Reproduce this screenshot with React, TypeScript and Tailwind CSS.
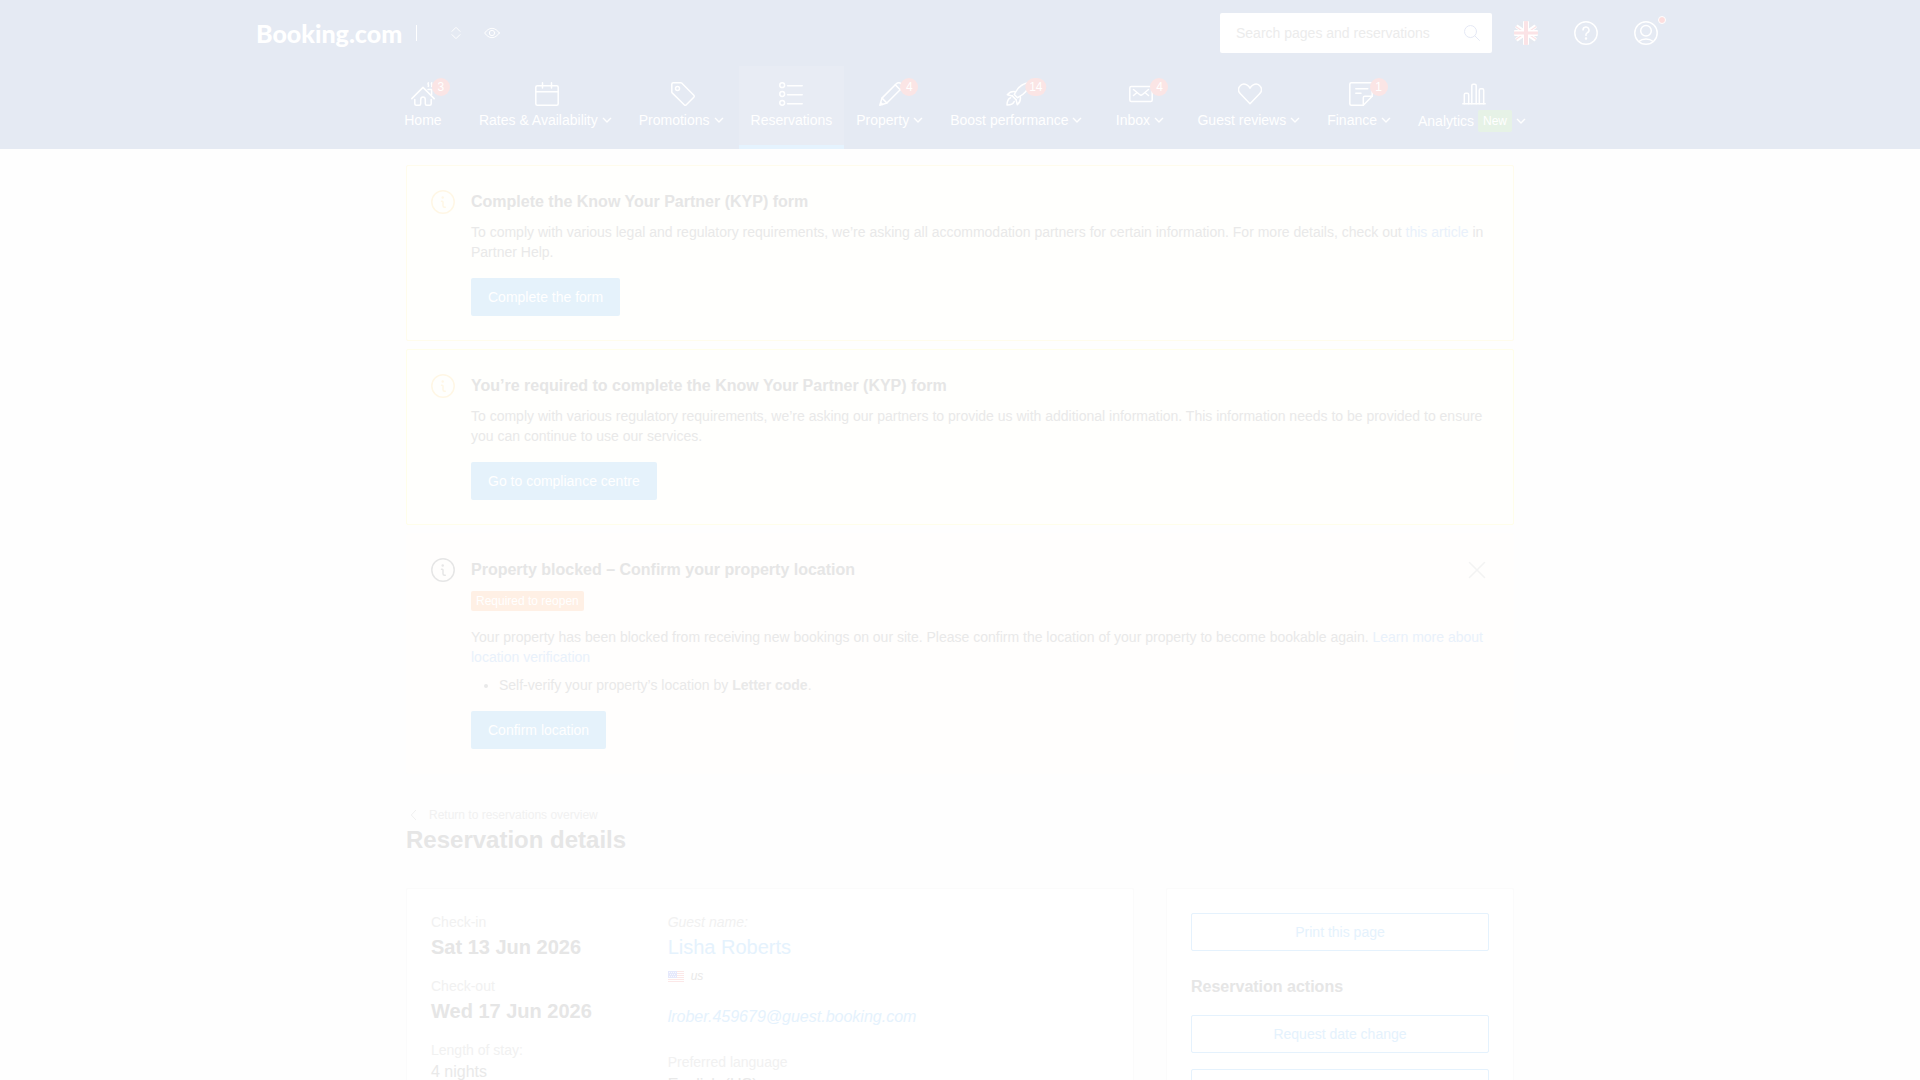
import React from "react";

type IconProps = { children: React.ReactNode; className?: string };

function Icon({ children, className = "size-6" }: IconProps) {
  return (
    <svg
      viewBox="0 0 24 24"
      fill="none"
      stroke="currentColor"
      strokeWidth="1.5"
      strokeLinecap="round"
      strokeLinejoin="round"
      aria-hidden="true"
      className={className}
    >
      {children}
    </svg>
  );
}

const icons = {
  home: (
    <>
      <path d="M.8 16.6 12 5.4l11.2 11.2" />
      <path d="M3.8 17.5v4.2c0 .9.6 1.5 1.5 1.5h2.9c.9 0 1.5-.6 1.5-1.5v-4c0-1.700 1-2.700 2.300-2.700s2.300 1 2.300 2.700v4c0 .9.6 1.500 1.500 1.500h2.900c.9 0 1.500-.6 1.500-1.500v-4.200" />
      <path d="M17 7.500h3.600v5.200M17.300.9c-.9 1.300.9 1.900 0 3.600M20.700.9c-.9 1.300.9 1.900 0 3.600" />
    </>
  ),
  calendar: (
    <>
      <rect x=".8" y="3.700" width="22.400" height="19.500" rx="1.500" />
      <path d="M.8 9.700h22.400M7.500.8v5.200M16.500.8v5.200" />
    </>
  ),
  tag: (
    <>
      <path d="M2.300.8h7.500c.4 0 .8.200 1.100.4l11.900 12c.6.600.6 1.500 0 2.100l-7.500 7.500c-.6.600-1.500.6-2.100 0L1.200 10.900a1.500 1.500 0 0 1-.4-1.100V2.300C.8 1.500 1.500.8 2.300.8Z" />
      <circle cx="6.500" cy="6.500" r="2" />
    </>
  ),
  list: (
    <>
      <circle cx="3.200" cy="3.200" r="2.400" />
      <circle cx="3.200" cy="12" r="2.400" />
      <circle cx="3.200" cy="20.800" r="2.400" />
      <path d="M8.500 3.800h14.700M8.500 12.800h14.700M8.500 21.700h14.700" />
    </>
  ),
  pencil: (
    <>
      <path d="M22.200 1.800c-1.400-1.400-3.500-1.400-4.900 0L3 16.100.8 23.200l7.100-2.200L22.200 6.700c1.400-1.400 1.400-3.500 0-4.900Z" />
      <path d="m3 16.100 4.900 4.900M16.300 2.900l4.900 4.900M1.600 20.500l1.900 1.900" />
    </>
  ),
  rocket: (
    <>
      <path d="M8.300 12.500C11.500 5.500 16.500 1.300 23.200.8c-.5 6.700-4.700 11.700-11.700 14.900l-3.200-3.200Z" />
      <path d="M9.600 9.800c-3.500-.8-6 .3-8.300 2.900l5 1.200M14.200 14.400c.8 3.500-.3 6-2.900 8.300l-1.200-5" />
      <path d="M4.600 15.800c-2.300.8-3.500 3.500-3.600 7.200 3.700-.1 6.400-1.300 7.200-3.600M6.300 13.900l3.800 3.800" />
    </>
  ),
  mail: (
    <>
      <rect x=".8" y="4.500" width="22.400" height="15" rx="1.500" />
      <path d="m4.500 7.500 6 5a2.300 2.300 0 0 0 3 0l6-5M4.500 13.500l3-2.500M19.500 13.500l-3-2.500" />
    </>
  ),
  heart: (
    <path d="m12 21.800-9.600-10c-4.700-4.900.6-12 6.400-9 1.300.7 2.500 1.900 3.200 3.300.7-1.400 1.900-2.600 3.200-3.300 5.800-3 11.100 4.100 6.400 9L12 21.800Z" />
  ),
  note: (
    <>
      <path d="M14.300 23.200h-12c-.8 0-1.500-.7-1.500-1.500V2.300C.8 1.500 1.500.8 2.300.8h19.400c.8 0 1.500.7 1.500 1.500v12l-8.900 8.900Z" />
      <path d="M14.300 23.200v-7.500c0-.8.600-1.400 1.400-1.400h7.500M6.800 6.800h12M6.800 11.300h5.200" />
    </>
  ),
  chart: (
    <>
      <path d="M.8 21.700h22.400" />
      <path d="M2.300 21.700v-9c0-.8.600-1.400 1.400-1.400h1.600c.8 0 1.400.6 1.400 1.400v9M9.800 21.700V3.700c0-.8.600-1.400 1.400-1.400h1.600c.8 0 1.400.6 1.400 1.400v18M17.300 21.700V8.200c0-.8.600-1.400 1.400-1.400h1.600c.8 0 1.400.6 1.400 1.400v13.500" />
    </>
  ),
};

type NavItem = {
  label: string;
  icon: React.ReactNode;
  badge?: string;
  menu?: boolean;
  active?: boolean;
  isNew?: boolean;
};

const navItems: NavItem[] = [
  { label: "Home", icon: icons.home, badge: "3" },
  { label: "Rates & Availability", icon: icons.calendar, menu: true },
  { label: "Promotions", icon: icons.tag, menu: true },
  { label: "Reservations", icon: icons.list, active: true },
  { label: "Property", icon: icons.pencil, badge: "4", menu: true },
  { label: "Boost performance", icon: icons.rocket, badge: "14", menu: true },
  { label: "Inbox", icon: icons.mail, badge: "4", menu: true },
  { label: "Guest reviews", icon: icons.heart, menu: true },
  { label: "Finance", icon: icons.note, badge: "1", menu: true },
  { label: "Analytics", icon: icons.chart, menu: true, isNew: true },
];

function NavLink({ item }: { item: NavItem }) {
  return (
    <a
      href="#"
      aria-current={item.active ? "page" : undefined}
      className={
        item.active
          ? "flex min-w-[88px] flex-col items-center border-b-4 border-[#e5f3fe] bg-[#e8ecf4] px-3 pt-4"
          : "flex min-w-[88px] flex-col items-center border-b-4 border-transparent px-3 pt-4"
      }
    >
      <span className="relative">
        <Icon>{item.icon}</Icon>
        {item.badge && (
          <span className="absolute -top-1 left-[30px] h-[18px] min-w-[18px] -translate-x-1/2 rounded-full bg-[#fbe5e5] px-1 text-center text-[12px] leading-[18px]">
            {item.badge}
          </span>
        )}
      </span>
      <span className="mt-1 flex items-center whitespace-nowrap leading-5">
        {item.label}
        {item.isNew && (
          <span className="ml-1 rounded-xs bg-[#e6f2e6] px-[5px] py-px text-[12px] leading-5">New</span>
        )}
        {item.menu && (
          <Icon className="ml-px size-4">
            <path strokeWidth="2" d="m6.500 9.500 5.500 5.500 5.500-5.500" />
          </Icon>
        )}
      </span>
    </a>
  );
}

function UkFlag() {
  return (
    <svg viewBox="0 0 24 24" className="size-6" aria-hidden="true">
      <clipPath id="uk">
        <circle cx="12" cy="12" r="12" />
      </clipPath>
      <g clipPath="url(#uk)">
        <path fill="#e5e9f0" d="M0 0h24v24H0z" />
        <path stroke="#fff" strokeWidth="4" d="m-2 2 28 20M-2 22 26 2" />
        <path stroke="#fbe3e6" strokeWidth="1.300" d="m-1 3.500 12 8.500M25 20.500 13 12M-1 20.500 11 12M25 3.500 13 12" />
        <path stroke="#fff" strokeWidth="6" d="M12 0v24M0 12h24" />
        <path stroke="#fbe3e6" strokeWidth="4" d="M12 0v24" />
        <path stroke="#fbe3e6" strokeWidth="3" d="M0 12h24" />
      </g>
    </svg>
  );
}

function UsFlag() {
  return (
    <svg viewBox="0 0 16 11" className="h-[11px] w-4" aria-hidden="true">
      <path fill="#fff" d="M0 0h16v11H0z" />
      <path stroke="#fce8e8" d="M0 .5h16M0 2.500h16M0 4.500h16M0 6.500h16M0 8.500h16M0 10.500h16" />
      <path fill="#e6e9fc" d="M0 0h9v7H0z" />
      <path stroke="#f8f9ff" strokeDasharray="1 1" d="M1 1.500h7M2 3.500h6M1 5.500h7" />
    </svg>
  );
}

function Header() {
  return (
    <header className="bg-[#e5eaf3] text-white">
      <div className="mx-auto flex h-[66px] max-w-[1440px] items-center px-4">
        <a href="#" className="w-36 font-['Lato',sans-serif] text-[25px] leading-8 font-black">
          Booking.com
        </a>
        <span className="ml-4 h-4 w-px bg-white" />
        <button type="button" aria-label="Switch property" className="ml-[31px]">
          <Icon className="size-4">
            <path d="m6 9.500 6-6 6 6M6 14.500l6 6 6-6" />
          </Icon>
        </button>
        <button type="button" aria-label="View page" className="ml-5">
          <Icon className="size-4">
            <path d="M23 12c-3 4.300-6.800 7-11 7S4 16.300 1 12c3-4.300 6.800-7 11-7s8 2.700 11 7Z" />
            <circle cx="12" cy="12" r="4" />
          </Icon>
        </button>
        <div className="ml-auto flex items-center">
          <form className="flex h-10 w-[272px] items-center rounded-xs bg-white px-4 pr-3">
            <input
              type="text"
              aria-label="Search pages and reservations"
              placeholder="Search pages and reservations"
              className="min-w-0 flex-1 text-[#e6e6e6] outline-none placeholder:text-[#ececec]"
            />
            <button type="button" aria-label="Search" className="text-[#e5e9f5]">
              <Icon className="size-4">
                <circle cx="9.800" cy="9.800" r="9" />
                <path d="m16.200 16.200 7 7" />
              </Icon>
            </button>
          </form>
          <div className="ml-4 flex items-center gap-6">
            <button type="button" aria-label="Language" className="flex size-9 items-center justify-center">
              <UkFlag />
            </button>
            <button type="button" aria-label="Help" className="flex size-9 items-center justify-center">
              <Icon>
                <circle cx="12" cy="12" r="11.200" />
                <path d="M9 9a3 3 0 1 1 4.200 2.800c-.8.400-1.200 1-1.200 1.800v.8" />
                <circle cx="12" cy="17.600" r=".5" fill="currentColor" />
              </Icon>
            </button>
            <button type="button" aria-label="Account" className="relative flex size-9 items-center justify-center">
              <Icon>
                <circle cx="12" cy="12" r="11.200" />
                <circle cx="12" cy="9.800" r="5.300" />
                <path d="M4.700 20.500a12 12 0 0 1 14.600 0" />
              </Icon>
              <span className="absolute top-px -right-0.5 size-2 rounded-full border border-white bg-[#fddede]" />
            </button>
          </div>
        </div>
      </div>
      <nav className="flex h-[83px] justify-center">
        {navItems.map((item) => (
          <NavLink key={item.label} item={item} />
        ))}
      </nav>
    </header>
  );
}

type BannerProps = {
  title: string;
  action: string;
  box: string;
  iconColor: string;
  closable?: boolean;
  children: React.ReactNode;
};

function Banner({ title, action, box, iconColor, closable, children }: BannerProps) {
  return (
    <section className={"flex rounded-xs border p-6 " + box}>
      <span className={iconColor}>
        <Icon>
          <circle cx="12" cy="12" r="11.200" />
          <path d="M14.300 17.200h-.8c-.8 0-1.500-.7-1.500-1.500V12c0-.4-.3-.8-.8-.8h-.7" />
          <circle cx="11.700" cy="7.500" r=".5" fill="currentColor" />
        </Icon>
      </span>
      <div className="ml-4 flex-1">
        <div className="flex items-center justify-between">
          <h2 className="text-base font-bold text-[#e6e6e6]">{title}</h2>
          {closable && (
            <button type="button" aria-label="Dismiss" className="text-[#f3f3f3]">
              <Icon>
                <path d="m4.500 4.500 15 15M19.500 4.500l-15 15" />
              </Icon>
            </button>
          )}
        </div>
        {children}
        <button type="button" className="mt-4 h-[38px] rounded-xs bg-[#e5f2fb] px-[17px] text-white">
          {action}
        </button>
      </div>
    </section>
  );
}

function SideButton({ children }: { children: React.ReactNode }) {
  return (
    <button type="button" className="h-[38px] w-full rounded-xs border border-[#e5f2fd] bg-white text-[#e5f2fd]">
      {children}
    </button>
  );
}

function FieldLabel({ children }: { children: React.ReactNode }) {
  return <p className="pb-0.5 leading-[18px] text-[#f1f1f1]">{children}</p>;
}

export default function App() {
  return (
    <div className="min-h-screen bg-[#fefefe] font-['Liberation_Sans',Arial,sans-serif] text-sm leading-5 text-[#e9e9e9]">
      <Header />
      <main className="mx-auto max-w-[1108px] pt-4">
        <div className="flex flex-col gap-2">
          <Banner
            title="Complete the Know Your Partner (KYP) form"
            action="Complete the form"
            box="border-[#fffcec] bg-[#fffffd]"
            iconColor="text-[#fff7e5]"
          >
            <p className="mt-2">
              To comply with various legal and regulatory requirements, we’re asking all accommodation partners for
              certain information. For more details, check out{" "}
              <a href="#" className="text-[#e9f1fb]">
                this article
              </a>{" "}
              in Partner Help.
            </p>
          </Banner>
          <Banner
            title="You’re required to complete the Know Your Partner (KYP) form"
            action="Go to compliance centre"
            box="border-[#fffeea] bg-[#fffffd]"
            iconColor="text-[#fff7e5]"
          >
            <p className="mt-2">
              To comply with various regulatory requirements, we’re asking our partners to provide us with additional
              information. This information needs to be provided to ensure you can continue to use our services.
            </p>
          </Banner>
          <Banner
            title="Property blocked – Confirm your property location"
            action="Confirm location"
            box="border-[#fffefd] bg-[#fffefd]"
            iconColor="text-[#e6e6e6]"
            closable
          >
            <div className="mt-[9px]">
              <span className="block w-fit rounded-xs bg-[#fff0e5] px-[5px] text-xs leading-5 text-white">
                Required to reopen
              </span>
            </div>
            <p className="mt-4">
              Your property has been blocked from receiving new bookings on our site. Please confirm the location of
              your property to become bookable again.{" "}
              <a href="#" className="text-[#e9f1fb]">
                Learn more about location verification
              </a>
            </p>
            <ul className="mt-2 list-disc pl-7">
              <li>
                Self-verify your property’s location by <strong>Letter code</strong>.
              </li>
            </ul>
          </Banner>
        </div>

        <a href="#" className="mt-8 flex items-center gap-[7px] text-xs leading-[18px] text-[#f1f1f1]">
          <Icon className="size-4">
            <path d="M14.500 5 8 12l6.500 7" />
          </Icon>
          Return to reservations overview
        </a>
        <h1 className="text-2xl font-bold text-[#e6e6e6]">Reservation details</h1>

        <div className="mt-8 grid grid-cols-3 gap-8">
          <section className="col-span-2 grid grid-cols-3 gap-8 rounded-xs border border-[#fbfbfb] bg-white p-6">
            <div>
              <FieldLabel>Check-in</FieldLabel>
              <p className="mb-4 text-xl font-bold text-[#e6e6e6]">Sat 13 Jun 2026</p>
              <FieldLabel>Check-out</FieldLabel>
              <p className="mb-4 text-xl font-bold text-[#e6e6e6]">Wed 17 Jun 2026</p>
              <FieldLabel>Length of stay:</FieldLabel>
              <p className="text-base leading-[22px]">4 nights</p>
            </div>
            <div className="col-span-2">
              <div className="italic">
                <FieldLabel>Guest name:</FieldLabel>
              </div>
              <a href="#" className="block text-xl text-[#e5f2fd]">
                Lisha Roberts
              </a>
              <p className="mt-[5px] flex items-center gap-[7px] text-xs leading-5 italic">
                <UsFlag />
                us
              </p>
              <a href="#" className="mt-[19px] mb-6 block text-base text-[#e5f2fd] italic">
                lrober.459679@guest.booking.com
              </a>
              <FieldLabel>Preferred language</FieldLabel>
              <p className="text-base">English (US)</p>
            </div>
          </section>
          <aside className="flex flex-col gap-4 rounded-xs border border-[#fbfbfb] bg-white p-6">
            <SideButton>Print this page</SideButton>
            <h2 className="mt-2 text-base font-bold text-[#e6e6e6]">Reservation actions</h2>
            <SideButton>Request date change</SideButton>
            <SideButton>Change reservation status</SideButton>
          </aside>
        </div>
      </main>
    </div>
  );
}
